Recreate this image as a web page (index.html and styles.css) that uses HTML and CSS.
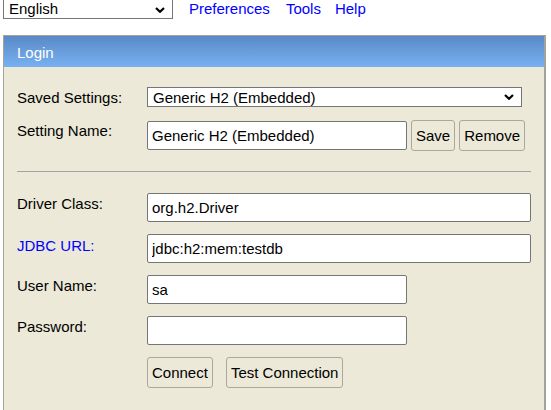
FILE: index.html
```html
<!DOCTYPE html>
<html>
<head>
<meta charset="utf-8">
<title>H2 Console</title>
<link rel="stylesheet" href="styles.css">
</head>
<body>
<div class="topbar">
  <span class="selwrap lang-wrap">
    <select class="lang"><option>English</option></select>
    <svg class="chev chev-lang" width="10" height="6" viewBox="0 0 10 6"><path d="M1 1 L5 4.8 L9 1" fill="none" stroke="#000" stroke-width="2.2"/></svg>
  </span>
  <a class="nav nav-pref" href="#">Preferences</a>
  <a class="nav nav-tools" href="#">Tools</a>
  <a class="nav nav-help" href="#">Help</a>
</div>
<div class="panel">
  <div class="panel-head">Login</div>
  <div class="panel-body">
    <div class="row row-saved">
      <label class="lbl">Saved Settings:</label>
      <span class="selwrap">
        <select class="sel-saved"><option>Generic H2 (Embedded)</option></select>
        <svg class="chev chev-saved" width="10" height="6" viewBox="0 0 10 6"><path d="M1 1 L5 4.8 L9 1" fill="none" stroke="#000" stroke-width="2.2"/></svg>
      </span>
    </div>
    <div class="row row-name">
      <label class="lbl">Setting Name:</label>
      <input class="inp inp-short inp-name" type="text" value="Generic H2 (Embedded)">
      <button class="btn btn-save">Save</button>
      <button class="btn btn-remove">Remove</button>
    </div>
    <hr class="sep">
    <div class="row">
      <label class="lbl">Driver Class:</label>
      <input class="inp inp-long" type="text" value="org.h2.Driver">
    </div>
    <div class="row">
      <a class="lbl lbl-link" href="#">JDBC URL:</a>
      <input class="inp inp-long" type="text" value="jdbc:h2:mem:testdb">
    </div>
    <div class="row">
      <label class="lbl">User Name:</label>
      <input class="inp inp-short" type="text" value="sa">
    </div>
    <div class="row">
      <label class="lbl">Password:</label>
      <input class="inp inp-short" type="password" value="">
    </div>
    <div class="row row-actions">
      <button class="btn">Connect</button>
      <button class="btn btn-test">Test Connection</button>
    </div>
  </div>
</div>
</body>
</html>
```
FILE: styles.css
```css
body {
  margin: 0;
  background: #ffffff;
  color: #000000;
  font-family: "Liberation Sans", Arial, sans-serif;
  font-size: 15px;
}

.topbar {
  display: flex;
  align-items: center;
  height: 21px;
  margin-top: -2px;
}

.selwrap {
  position: relative;
  display: inline-flex;
}

.lang-wrap {
  margin-left: 3px;
}

.chev {
  position: absolute;
  right: 8px;
  pointer-events: none;
}

.chev-lang { top: 9px; }
.chev-saved { top: 7px; }

.lang {
  -webkit-appearance: none;
  appearance: none;
  width: 170px;
  height: 21px;
  box-sizing: border-box;
  margin: 0;
  padding: 0 0 0 5px;
  border: 1px solid #767676;
  border-radius: 0;
  background: #ffffff;
  color: #000000;
  font-family: "Liberation Sans", Arial, sans-serif;
  font-size: 15px;
  line-height: 17px;
}

.nav {
  color: #0000ff;
  text-decoration: none;
  line-height: 17px;
}

.nav-pref { margin-left: 16px; }
.nav-tools { margin-left: 16px; }
.nav-help { margin-left: 14px; }

.panel {
  margin: 16px 0 0 3px;
  width: 543px;
  box-sizing: border-box;
  border: 1px solid #a5a398;
  border-right-width: 2px;
  border-bottom: none;
  background: #ece9d8;
}

.panel-head {
  padding: 8px 13px 6px;
  line-height: 17px;
  color: #ffffff;
  background: linear-gradient(to bottom, #5a89c6, #77b1f2);
}

.panel-body {
  padding: 20px 13px 40px;
}

.row {
  display: flex;
  align-items: flex-start;
  margin-bottom: 12px;
}

.row-saved {
  margin-bottom: 13px;
}

.row-name {
  margin-bottom: 0;
}

.lbl {
  flex: 0 0 130px;
  width: 130px;
  padding-top: 2px;
  line-height: 17px;
  color: #000000;
}

.lbl-link {
  color: #0000ff;
  text-decoration: none;
  padding-top: 3px;
}

.sel-saved {
  -webkit-appearance: none;
  appearance: none;
  width: 375px;
  height: 20px;
  box-sizing: border-box;
  margin: 0;
  padding: 0 0 0 5px;
  border: 1px solid #767676;
  border-radius: 0;
  background: #ffffff;
  color: #000000;
  font-family: "Liberation Sans", Arial, sans-serif;
  font-size: 15px;
  line-height: 17px;
}

.inp {
  height: 29px;
  box-sizing: border-box;
  margin: 0;
  padding: 0 4px;
  border: 1px solid #767676;
  border-radius: 2px;
  background: #ffffff;
  color: #000000;
  font-family: "Liberation Sans", Arial, sans-serif;
  font-size: 15px;
}

.inp-short { width: 260px; }
.inp-long { width: 385px; }

.inp-name {
  margin-top: 1px;
}

.btn {
  height: 31px;
  box-sizing: border-box;
  margin: 0;
  padding: 0 4px;
  border: 1px solid #aaa79d;
  border-radius: 3px;
  background: #ece9d8;
  color: #000000;
  font-family: "Liberation Sans", Arial, sans-serif;
  font-size: 15px;
}

.btn-save { margin-left: 4px; }
.btn-remove { margin-left: 4px; }

.sep {
  margin: 20px 0 21px;
  height: 0;
  border: none;
  border-top: 1px solid #a3a3a3;
}

.row-actions {
  padding-left: 130px;
  margin-bottom: 0;
}

.btn-test { margin-left: 13px; }
```
